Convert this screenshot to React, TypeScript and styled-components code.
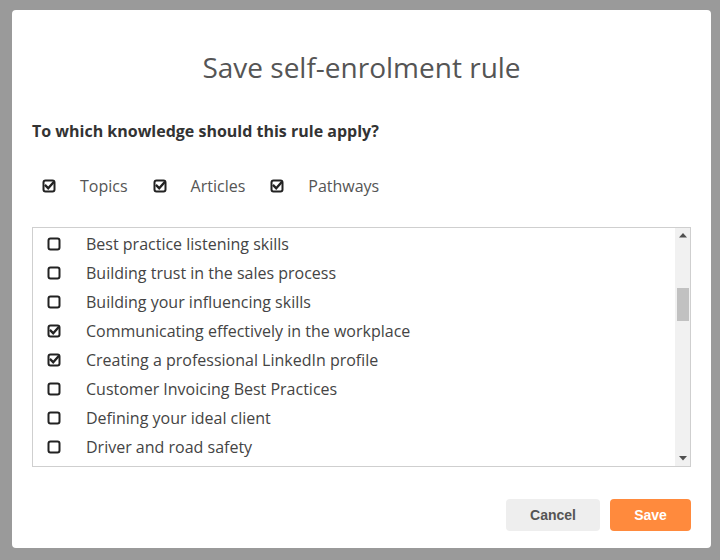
import React from "react";
import styled, { createGlobalStyle } from "styled-components";

const GlobalStyle = createGlobalStyle`
  html, body { margin: 0; padding: 0; }
  body {
    background: #9a9a9a;
    width: 720px;
    height: 560px;
    overflow: hidden;
    font-family: "Open Sans", "Noto Sans", sans-serif;
  }
`;

const Page = styled.div`
  width: 720px;
  height: 560px;
  padding: 10px 0 0 12px;
  box-sizing: border-box;
`;

const Dialog = styled.div`
  width: 699px;
  height: 538px;
  background: #fff;
  border-radius: 4px;
  box-sizing: border-box;
  padding: 38px 20px 0 20px;
  display: flex;
  flex-direction: column;
`;

const Title = styled.h1`
  margin: 0;
  font-size: 28px;
  line-height: 38px;
  font-weight: 400;
  color: #555;
  text-align: center;
`;

const Question = styled.h2`
  margin: 35px 0 0;
  font-size: 16px;
  line-height: 20px;
  font-weight: 700;
  color: #333;
`;

const TypeRow = styled.div`
  margin-top: 33px;
  padding-left: 10px;
  display: flex;
  align-items: center;
  height: 24px;
`;

const TypeOption = styled.label`
  display: flex;
  align-items: center;
  gap: 24px;
  margin-right: 25px;
  font-size: 16px;
  color: #555;
`;

const ListBox = styled.div`
  margin-top: 29px;
  height: 240px;
  box-sizing: border-box;
  border: 1px solid #cfcfcf;
  display: flex;
`;

const Rows = styled.div`
  flex: 1;
  overflow: hidden;
  padding-top: 1px;
`;

const Row = styled.div`
  height: 29px;
  display: flex;
  align-items: center;
  gap: 25px;
  padding-left: 14px;
  font-size: 16px;
  color: #444;
  white-space: nowrap;
`;

const ScrollBar = styled.div`
  width: 15px;
  flex: none;
  background: #f1f1f1;
  display: flex;
  flex-direction: column;
`;

const ArrowButton = styled.div`
  height: 15px;
  display: flex;
  align-items: center;
  justify-content: center;
`;

const Track = styled.div`
  flex: 1;
  padding: 0 1px 0 2px;
`;

const Thumb = styled.div<{ $offset: number; $size: number }>`
  margin-top: ${(p) => p.$offset}px;
  height: ${(p) => p.$size}px;
  background: #c1c1c1;
`;

const Footer = styled.div`
  margin-top: 32px;
  display: flex;
  justify-content: flex-end;
  gap: 10px;
`;

const Button = styled.button<{ $primary?: boolean }>`
  height: 32px;
  width: ${(p) => (p.$primary ? "81px" : "94px")};
  border: none;
  border-radius: 4px;
  font-family: "Liberation Sans", Arial, sans-serif;
  font-weight: 700;
  font-size: 14px;
  color: ${(p) => (p.$primary ? "#fff" : "#555")};
  background: ${(p) => (p.$primary ? "#ff8a3d" : "#eeeeee")};
  cursor: pointer;
`;

const Box = ({ checked }: { checked?: boolean }) => (
  <svg width="14" height="14" viewBox="0 0 14 14" style={{ flex: "none" }}>
    <rect x="1.5" y="1.5" width="11" height="11" rx="2" fill="none" stroke="#222" strokeWidth="2" />
    {checked && (
      <path d="M3.8 6.8 L6.2 9.2 L11.2 3.6" fill="none" stroke="#222" strokeWidth="2.4" strokeLinecap="square" />
    )}
  </svg>
);

const Arrow = ({ down }: { down?: boolean }) => (
  <svg width="8" height="5" viewBox="0 0 8 5">
    <path d={down ? "M0 0 H8 L4 4.5 Z" : "M0 4.5 H8 L4 0 Z"} fill="#505050" />
  </svg>
);

const items: [string, boolean][] = [
  ["Best practice listening skills", false],
  ["Building trust in the sales process", false],
  ["Building your influencing skills", false],
  ["Communicating effectively in the workplace", true],
  ["Creating a professional LinkedIn profile", true],
  ["Customer Invoicing Best Practices", false],
  ["Defining your ideal client", false],
  ["Driver and road safety", false],
];

export default function App() {
  return (
    <>
      <GlobalStyle />
      <Page>
        <Dialog>
          <Title>Save self-enrolment rule</Title>
          <Question>To which knowledge should this rule apply?</Question>
          <TypeRow>
            <TypeOption><Box checked />Topics</TypeOption>
            <TypeOption><Box checked />Articles</TypeOption>
            <TypeOption><Box checked />Pathways</TypeOption>
          </TypeRow>
          <ListBox>
            <Rows>
              {items.map(([t, c]) => (
                <Row key={t}>
                  <Box checked={c} />
                  {t}
                </Row>
              ))}
            </Rows>
            <ScrollBar>
              <ArrowButton><Arrow /></ArrowButton>
              <Track>
                <Thumb $offset={45} $size={33} />
              </Track>
              <ArrowButton><Arrow down /></ArrowButton>
            </ScrollBar>
          </ListBox>
          <Footer>
            <Button>Cancel</Button>
            <Button $primary>Save</Button>
          </Footer>
        </Dialog>
      </Page>
    </>
  );
}
